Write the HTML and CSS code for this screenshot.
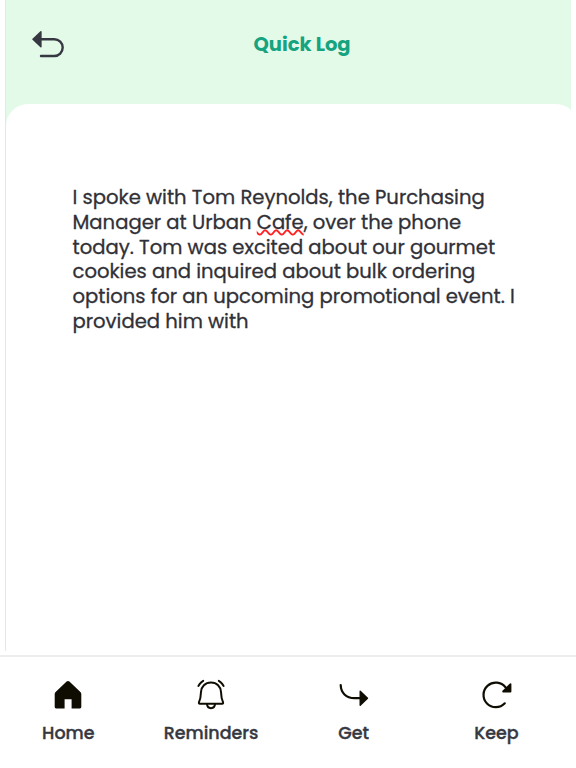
FILE: index.html
```html
<!DOCTYPE html>
<html lang="en">
<head>
    <meta charset="UTF-8">
    <meta name="viewport" content="width=device-width, initial-scale=1.0">
    <title>Quick Log</title>
    <link rel="stylesheet" href="styles.css">
</head>
<body>
<div class="app">
    <main class="screen">
        <header class="header">
            <button class="back" aria-label="Back">
                <svg width="34" height="30" viewBox="0 0 34 30">
                    <path d="M8.9 1.8 V16.8 L1 9.3 Z" fill="#363841" stroke="#363841" stroke-width="1.5" stroke-linejoin="round"/>
                    <path d="M9 9.2 H22.3 A8.4 8.4 0 0 1 22.3 26 H9" fill="none" stroke="#363841" stroke-width="2.4" stroke-linecap="round"/>
                </svg>
            </button>
            <h1 class="title">Quick Log</h1>
        </header>
        <div class="sheet">
            <p class="note">I spoke with Tom Reynolds, the Purchasing Manager at Urban <span class="misspelled">Cafe</span>, over the phone today. Tom was excited about our gourmet cookies and inquired about bulk ordering options for an upcoming promotional event. I provided him with</p>
        </div>
    </main>
    <nav class="tabbar">
        <a class="tab">
            <svg class="icon" width="32" height="32" viewBox="0 0 32 32">
                <path d="M14.6 2.6 Q16 1.4 17.4 2.6 L28.4 13 Q29.3 13.9 29.3 15 V28 Q29.3 29.4 28 29.4 H19.6 V20.3 H12.6 V29.4 H4 Q2.7 29.4 2.7 28 V15 Q2.7 13.9 3.6 13 Z" fill="#0f0c02"/>
            </svg>
            <span class="label">Home</span>
        </a>
        <a class="tab">
            <svg class="icon" width="32" height="32" viewBox="0 0 32 32" fill="none" stroke="#0f0c02" stroke-width="2" stroke-linecap="round" stroke-linejoin="round">
                <path d="M16 3.5 C21.8 3.5 25.8 7.5 26 13 C26.2 18 26.5 20 28 23.2 Q28.5 24.7 27.2 24.7 H4.8 Q3.5 24.7 4 23.2 C5.5 20 5.8 18 6 13 C6.2 7.5 10.2 3.5 16 3.5 Z"/>
                <path d="M12 25.2 C12.4 30.5 19.6 30.5 20 25.2"/>
                <path d="M3.4 7 L4.8 4.9 Q6.2 3 8.2 1.8"/>
                <path d="M23.8 1.8 Q25.8 3 27.2 4.9 L28.6 7"/>
            </svg>
            <span class="label">Reminders</span>
        </a>
        <a class="tab">
            <svg class="icon" width="32" height="32" viewBox="0 0 32 32">
                <path d="M2.7 6 C2.9 13.5 8 19.2 16.5 19.2 H23" fill="none" stroke="#0f0c02" stroke-width="2.2" stroke-linecap="round"/>
                <path d="M22.2 12.2 V26.2 L29.5 19.2 Z" fill="#0f0c02" stroke="#0f0c02" stroke-width="1.4" stroke-linejoin="round"/>
            </svg>
            <span class="label">Get</span>
        </a>
        <a class="tab">
            <svg class="icon" width="32" height="32" viewBox="0 0 32 32">
                <path d="M24.8 24.3 A12.3 12.3 0 1 1 25.5 8.3" fill="none" stroke="#0f0c02" stroke-width="2.2" stroke-linecap="round"/>
                <path d="M30.5 5.2 V12.5 H23.1 Z" fill="#0f0c02" stroke="#0f0c02" stroke-width="1.8" stroke-linejoin="round"/>
            </svg>
            <span class="label">Keep</span>
        </a>
    </nav>
</div>
</body>
</html>
```
FILE: styles.css
```css
* {
    box-sizing: border-box;
}
body {
    margin: 0;
    background: #fff;
    font-family: Poppins, Inter, sans-serif;
    color: #363841;
}
.app {
    display: flex;
    flex-direction: column;
    height: 768px;
    overflow: hidden;
}
.screen {
    display: flex;
    flex-direction: column;
    height: 651px;
    margin: 0 5px;
    border-left: 1px solid #e6e6e6;
    background: linear-gradient(#e4fae9 140px, #fff 140px);
    overflow: hidden;
}
.header {
    display: grid;
    grid-template-columns: 84px 1fr 57px;
    align-items: center;
    height: 103.5px;
    padding-bottom: 14px;
}
.back {
    width: 34px;
    height: 30px;
    margin: 0 0 0 26px;
    padding: 0;
    border: none;
    background: none;
    cursor: pointer;
}
.back svg {
    display: block;
}
.title {
    margin: 0;
    text-align: center;
    font-size: 19.5px;
    font-weight: 700;
    line-height: 30px;
    color: #16a37f;
}
.sheet {
    flex: 1;
    margin-right: -7px;
    padding: 81.4px 0 0 66.5px;
    border-radius: 22px 22px 0 0;
    background: #fff;
}
.note {
    width: 450px;
    margin: 0;
    font-size: 19.6px;
    line-height: 24.85px;
    color: #303037;
    -webkit-text-stroke: 0.3px #303037;
}
.misspelled {
    text-decoration: underline wavy #f22 1.6px;
    text-underline-offset: 0;
    text-decoration-skip-ink: none;
}
.tabbar {
    display: grid;
    grid-template-columns: repeat(4, 142.7px);
    flex: 1;
    margin-top: 4px;
    border-top: 2px solid #ededed;
}
.tab {
    display: flex;
    flex-direction: column;
    align-items: center;
    gap: 8.5px;
    padding: 22px 6px 0 0;
}
.icon {
    display: block;
}
.label {
    font-size: 17.5px;
    font-weight: 500;
    line-height: 26px;
    -webkit-text-stroke: 0.35px #363841;
}
```
